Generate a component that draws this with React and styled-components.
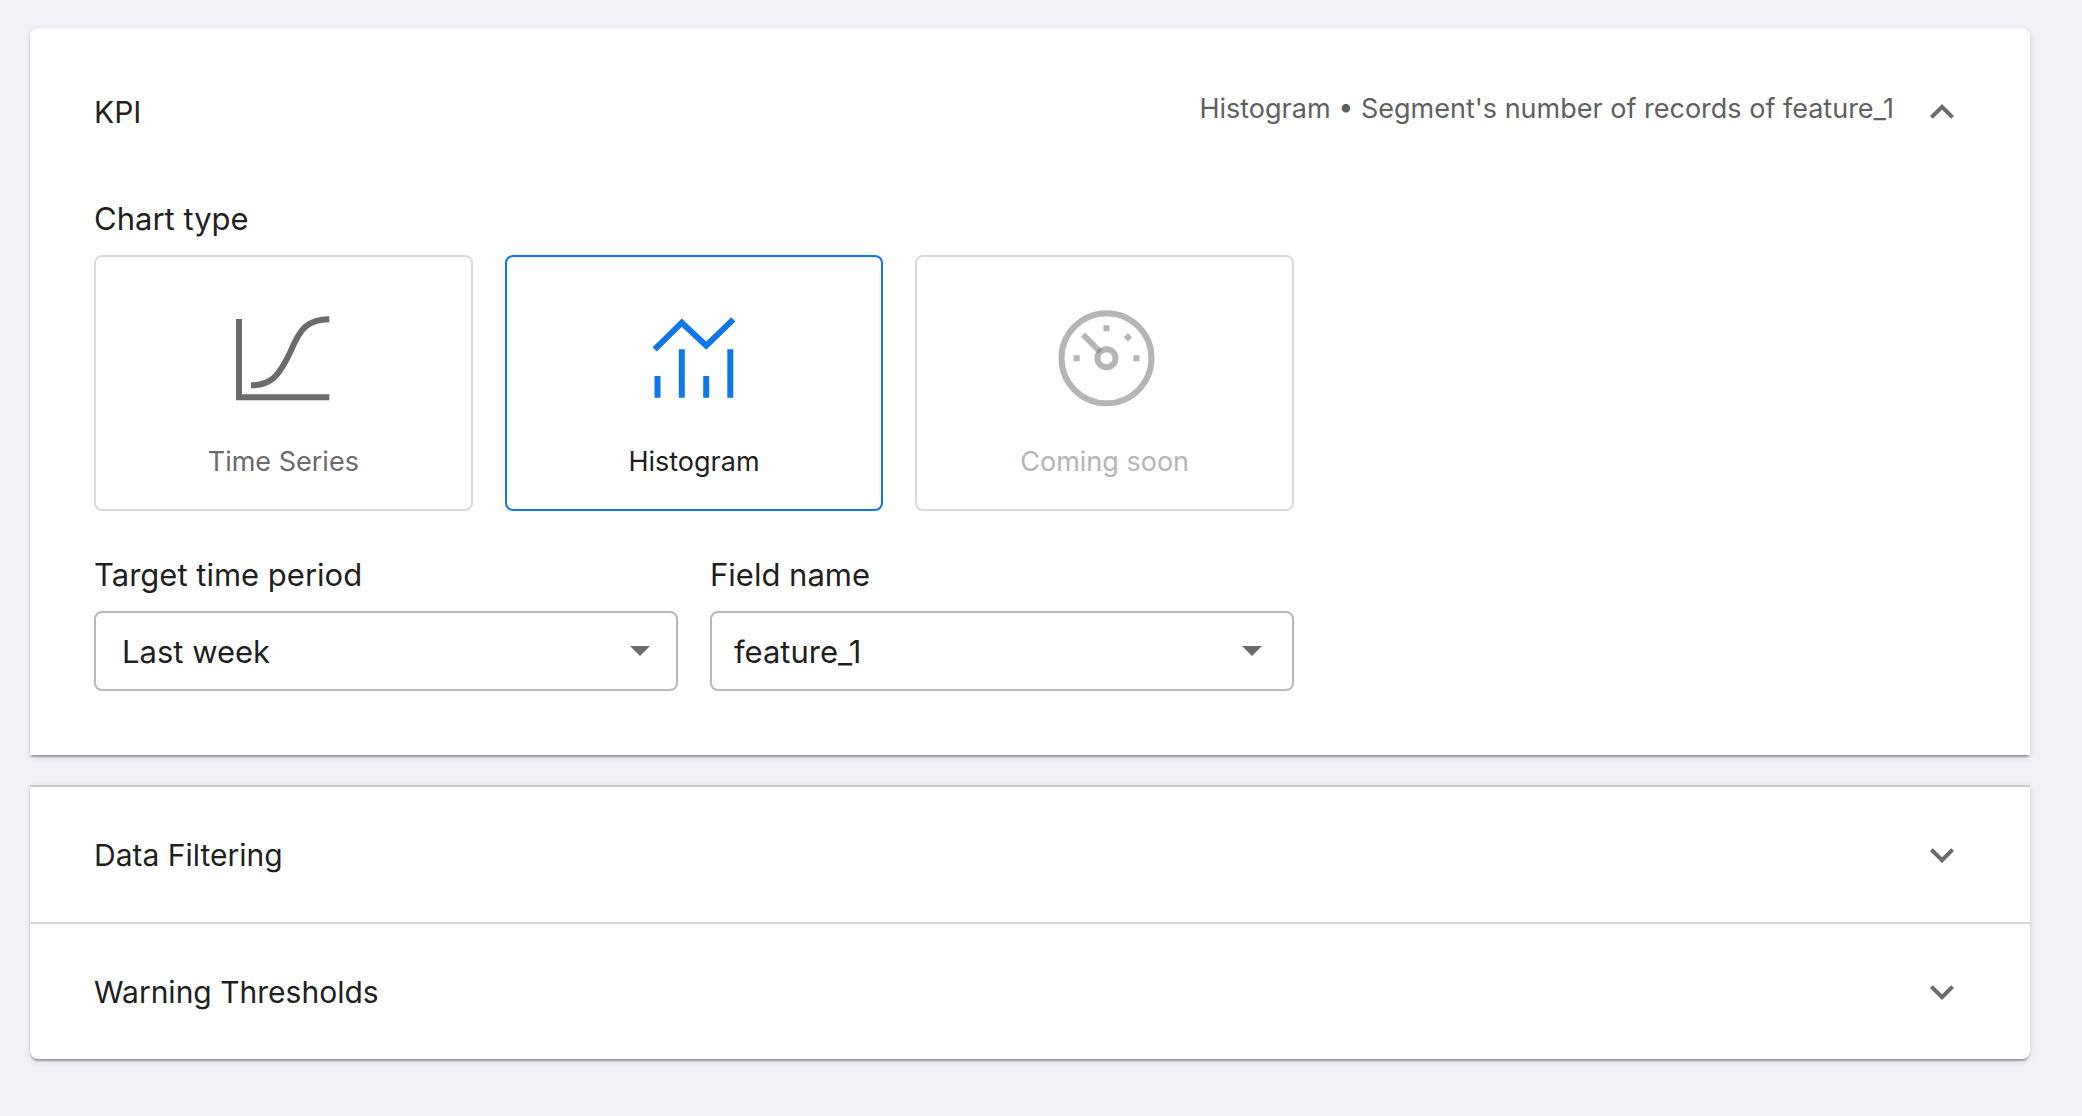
import { useState } from "react";
import styled, { createGlobalStyle } from "styled-components";
import { MdExpandLess, MdExpandMore } from "react-icons/md";

const chartTypes = [
  { id: "time", label: "Time Series", icon: "time" },
  { id: "histogram", label: "Histogram", icon: "histogram" },
  { id: "soon", label: "Coming soon", icon: "gauge", disabled: true },
];

const periods = ["Last day", "Last week", "Last month"];
const fields = ["feature_1", "feature_2", "feature_3"];

const icons = {
  time: (
    <>
      <path d="M4 9V87.3H94.3" />
      <path d="M16 75.3C36 75.3 44 66 55.2 42.3C65 19 72 9.3 94.3 9.3" />
    </>
  ),
  histogram: (
    <>
      <path d="M8.7 39.3L35.8 12.7L60.2 35.7L87.3 9.3" />
      <path d="M11.5 66V87.7M35.8 39.3V87.7M60.2 66V87.7M84.3 39.3V87.7" />
    </>
  ),
  gauge: (
    <>
      <circle cx="49.5" cy="48.3" r="45" />
      <circle cx="49.5" cy="48.3" r="9" />
      <path d="M26 24.7L43.2 42" />
      <path d="M49.5 15.3V21.3M16.7 48.3H22.7M76.5 48.3H82.5M68.8 29.4L73 25.2" />
    </>
  ),
};

const Section = ({ title, summary, open, onToggle, children }) => (
  <section>
    <Header type="button" aria-expanded={open} $open={open} onClick={onToggle}>
      <Title>{title}</Title>
      {open && summary && <Summary>{summary}</Summary>}
      {open ? <MdExpandLess size={48} /> : <MdExpandMore size={48} />}
    </Header>
    {open && children}
  </section>
);

const SelectField = ({ id, label, options, value, inset, onChange }) => (
  <Field>
    <Label htmlFor={id}>{label}</Label>
    <SelectBox $inset={inset}>
      <Select id={id} value={value} onChange={(e) => onChange(e.target.value)}>
        {options.map((option) => (
          <option key={option}>{option}</option>
        ))}
      </Select>
      <Arrow viewBox="0 0 20 10" aria-hidden="true">
        <path d="M0 0H20L10 10Z" />
      </Arrow>
    </SelectBox>
  </Field>
);

const App = () => {
  const [opened, setOpened] = useState("kpi");
  const [chart, setChart] = useState("histogram");
  const [period, setPeriod] = useState("Last week");
  const [field, setField] = useState("feature_1");

  const toggle = (name) => setOpened(opened === name ? "" : name);
  const current = chartTypes.find((type) => type.id === chart);

  return (
    <Page>
      <GlobalStyle />
      <Panel $round="8px 8px 0 0">
        <Section
          title="KPI"
          summary={`${current.label} • Segment's number of records of ${field}`}
          open={opened === "kpi"}
          onToggle={() => toggle("kpi")}
        >
          <Details>
            <Label as="h3" id="chart-type">Chart type</Label>
            <Cards role="group" aria-labelledby="chart-type">
              {chartTypes.map((type) => (
                <Card
                  key={type.id}
                  type="button"
                  disabled={type.disabled}
                  aria-pressed={chart === type.id}
                  $active={chart === type.id}
                  onClick={() => setChart(type.id)}
                >
                  <CardIcon viewBox="0 0 96 96" $active={chart === type.id} $faded={type.disabled}>
                    {icons[type.icon]}
                  </CardIcon>
                  {type.label}
                </Card>
              ))}
            </Cards>
            <Fields>
              <SelectField
                id="period"
                label="Target time period"
                options={periods}
                value={period}
                inset={26}
                onChange={setPeriod}
              />
              <SelectField
                id="field"
                label="Field name"
                options={fields}
                value={field}
                inset={22}
                onChange={setField}
              />
            </Fields>
          </Details>
        </Section>
      </Panel>
      <Panel $round="0 0 8px 8px" $ruled>
        <Section title="Data Filtering" open={opened === "data"} onToggle={() => toggle("data")} />
        <Section title="Warning Thresholds" open={opened === "warn"} onToggle={() => toggle("warn")} />
      </Panel>
    </Page>
  );
};

const GlobalStyle = createGlobalStyle`
  * {
    box-sizing: border-box;
  }
  body {
    margin: 0;
    background-color: #f2f3f9;
    color: #1f1f1f;
    font-family: "Inter", sans-serif;
  }
  button, select {
    font-family: inherit;
    color: inherit;
  }
`;

// LAYOUT
const Page = styled.main`
  display: flex;
  flex-direction: column;
  gap: 30px;
  padding: 28px 52px 56px 30px;
`;
const Panel = styled.div`
  background-color: white;
  border-top: ${({ $ruled }) => ($ruled ? "2px solid #c9cad0" : "none")};
  border-radius: ${({ $round }) => $round};
  box-shadow: 0 4px 2px -2px rgba(0, 0, 0, 0.2), 0 2px 2px rgba(0, 0, 0, 0.14),
    0 2px 6px rgba(0, 0, 0, 0.12);

  section + section {
    border-top: 2px solid #d6d6d6;
  }
`;
const Details = styled.div`
  padding: 0 64px 64px;
`;

// HEADER
const Header = styled.button`
  display: flex;
  align-items: center;
  width: 100%;
  min-height: ${({ $open }) => ($open ? "167px" : "135px")};
  padding: 0 64px;
  border: none;
  background: none;
  text-align: left;
  cursor: pointer;

  svg {
    flex: none;
    color: #6b6b6b;
  }
`;
const Title = styled.span`
  flex: 1;
  font-size: 30px;
  line-height: 48px;
`;
const Summary = styled.span`
  font-size: 27px;
  line-height: 40px;
  color: #5f5f5f;
  padding: 0 24px 6px 0;
`;

// CHART TYPE
const Label = styled.label`
  display: block;
  margin: 0 0 12px;
  font-size: 31px;
  font-weight: 400;
  line-height: 48px;
`;
const Cards = styled.div`
  display: grid;
  grid-template-columns: repeat(3, 1fr);
  gap: 32px;
  max-width: 1200px;
`;
const Card = styled.button`
  display: flex;
  flex-direction: column;
  align-items: center;
  gap: 36px;
  height: 256px;
  padding: 53px 0 0;
  border: 2px solid ${({ $active }) => ($active ? "#1077e9" : "#dbdbdb")};
  border-radius: 8px;
  background-color: white;
  font-size: 27px;
  line-height: 40px;
  color: ${({ $active }) => ($active ? "#1f1f1f" : "#6b6b6b")};
  cursor: pointer;

  &:disabled {
    color: #b5b5b5;
    cursor: default;
  }
`;
const CardIcon = styled.svg`
  width: 96px;
  height: 96px;
  overflow: visible;
  fill: none;
  stroke: ${({ $active }) => ($active ? "#1077e9" : "#6b6b6b")};
  stroke-width: 6;
  stroke-opacity: ${({ $faded }) => ($faded ? 0.5 : 1)};
`;

// SELECTS
const Fields = styled.div`
  display: grid;
  grid-template-columns: repeat(2, 1fr);
  gap: 32px;
  max-width: 1200px;
  margin-top: 40px;
`;
const Field = styled.div`
  min-width: 0;
`;
const SelectBox = styled.div`
  display: grid;
  align-items: center;

  > * {
    grid-area: 1 / 1;
  }
  select {
    padding-left: ${({ $inset }) => $inset}px;
  }
  svg {
    margin-right: ${({ $inset }) => 54 - $inset}px;
  }
`;
const Select = styled.select`
  appearance: none;
  width: 100%;
  height: 80px;
  border: 2px solid #b9b9b9;
  border-radius: 8px;
  background-color: white;
  font-size: 31px;
  cursor: pointer;
`;
const Arrow = styled.svg`
  justify-self: end;
  width: 20px;
  height: 10px;
  fill: #6b6b6b;
  pointer-events: none;
`;

export default App;
